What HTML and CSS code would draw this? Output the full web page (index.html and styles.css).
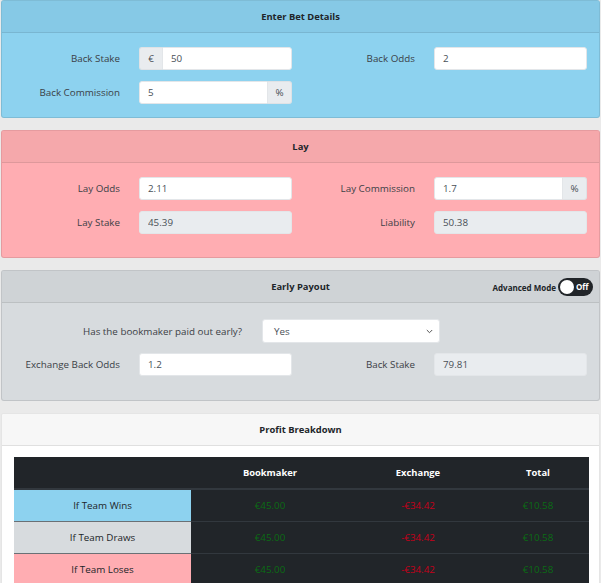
FILE: index.html
```html
<!DOCTYPE html>
<html>
<head>
<meta charset="utf-8">
<link rel="stylesheet" href="styles.css">
</head>
<body>
<div class="page">
  <section class="card card-blue">
    <div class="card-header">Enter Bet Details</div>
    <div class="card-body form-grid">
      <label class="lbl">Back Stake</label>
      <div class="group"><span class="addon addon-left">€</span><input class="field" value="50"></div>
      <label class="lbl">Back Odds</label>
      <input class="field" value="2">
      <label class="lbl">Back Commission</label>
      <div class="group"><input class="field" value="5"><span class="addon addon-right">%</span></div>
    </div>
  </section>

  <section class="card card-pink">
    <div class="card-header">Lay</div>
    <div class="card-body form-grid tall">
      <label class="lbl">Lay Odds</label>
      <input class="field" value="2.11">
      <label class="lbl">Lay Commission</label>
      <div class="group"><input class="field" value="1.7"><span class="addon addon-right">%</span></div>
      <label class="lbl">Lay Stake</label>
      <input class="field ro" value="45.39" readonly>
      <label class="lbl">Liability</label>
      <input class="field ro" value="50.38" readonly>
    </div>
  </section>

  <section class="card card-gray">
    <div class="card-header header-rel">Early Payout
      <div class="adv">
        <span class="adv-label">Advanced Mode</span>
        <span class="toggle"><span class="knob"></span><span class="toggle-text">Off</span></span>
      </div>
    </div>
    <div class="card-body gray-body">
      <div class="select-row">
        <label class="lbl">Has the bookmaker paid out early?</label>
        <div class="select">
          <span>Yes</span>
          <svg class="chev" width="7" height="5" viewBox="0 0 7 5"><path d="M0.8 1 L3.5 3.7 L6.2 1" fill="none" stroke="#555" stroke-width="1"/></svg>
        </div>
      </div>
      <div class="form-grid">
        <label class="lbl">Exchange Back Odds</label>
        <input class="field" value="1.2">
        <label class="lbl">Back Stake</label>
        <input class="field ro" value="79.81" readonly>
      </div>
    </div>
  </section>

  <section class="card card-white">
    <div class="card-header header-light">Profit Breakdown</div>
    <div class="table-wrap">
      <table class="results">
        <thead>
          <tr><th class="c1"></th><th class="c2">Bookmaker</th><th class="c3">Exchange</th><th class="c4">Total</th></tr>
        </thead>
        <tbody>
          <tr><td class="name n-blue">If Team Wins</td><td class="pos">€45.00</td><td class="neg">-€34.42</td><td class="pos">€10.58</td></tr>
          <tr><td class="name n-gray">If Team Draws</td><td class="pos">€45.00</td><td class="neg">-€34.42</td><td class="pos">€10.58</td></tr>
          <tr><td class="name n-pink">If Team Loses</td><td class="pos">€45.00</td><td class="neg">-€34.42</td><td class="pos">€10.58</td></tr>
        </tbody>
      </table>
    </div>
  </section>
</div>
</body>
</html>
```

FILE: styles.css
```css
* { box-sizing: border-box; }
html, body { margin: 0; padding: 0; }
body {
  background: #eaeaea;
  font-family: "Open Sans", "Noto Sans", sans-serif;
  font-size: 9.8px;
  color: #212529;
  overflow: hidden;
}
.page { padding: 0 1px; }
.card {
  border: 1px solid rgba(0,0,0,0.1);
  border-radius: 3px;
  margin-bottom: 12px;
  overflow: hidden;
}
.card-header {
  height: 32px;
  display: flex;
  align-items: center;
  justify-content: center;
  font-weight: 700;
  font-size: 9.4px;
  border-bottom: 1px solid rgba(0,0,0,0.09);
}
.card-blue { background: #8dd2ef; }
.card-blue .card-header { background: #86c9e6; }
.card-pink { background: #ffadb2; }
.card-pink .card-header { background: #f5a8ab; }
.card-gray { background: #d7dbde; }
.card-gray .card-header { background: #cfd3d6; }
.card-white { background: #fff; }
.header-light { background: #f7f7f7; }

.card-body { padding: 14px 12px 13px 0; }
.card-body.tall { padding-bottom: 23px; }
.form-grid {
  display: grid;
  grid-template-columns: 118px 153px 1fr 153px;
  column-gap: 19px;
  row-gap: 11px;
  align-items: center;
}
.lbl {
  text-align: right;
  color: #3b4046;
  white-space: nowrap;
}
.field {
  display: block;
  width: 100%;
  height: 23px;
  border: 1px solid #e3e6e9;
  border-radius: 3px;
  background: #fff;
  padding: 0 8px;
  font: inherit;
  color: #495057;
  outline: none;
}
.field.ro { background: #e9ecef; }
.group { display: flex; height: 23px; }
.group .field { flex: 1; min-width: 0; }
.addon {
  display: flex;
  align-items: center;
  justify-content: center;
  width: 23px;
  background: #e9ecef;
  border: 1px solid #dfe2e5;
  color: #495057;
}
.addon-left { border-radius: 3px 0 0 3px; border-right: 0; }
.addon-left + .field { border-radius: 0 3px 3px 0; }
.addon-right { border-radius: 0 3px 3px 0; border-left: 0; width: 24px; }
.group .field:first-child:not(:last-child) { border-radius: 3px 0 0 3px; }

.header-rel { position: relative; }
.adv {
  position: absolute;
  right: 6px;
  top: 7px;
  display: flex;
  align-items: center;
  gap: 2px;
}
.adv-label { font-size: 8px; font-weight: 700; color: #212529; }
.toggle {
  position: relative;
  display: flex;
  align-items: center;
  width: 35px;
  height: 18px;
  border-radius: 9px;
  background: #212529;
}
.knob {
  position: absolute;
  left: 2px;
  top: 2px;
  width: 14px;
  height: 14px;
  border-radius: 50%;
  background: #fff;
}
.toggle-text {
  position: absolute;
  left: 18px;
  top: 3px;
  font-size: 8px;
  font-weight: 700;
  color: #fff;
}
.gray-body { padding: 16px 12px 24px 0; }
.select-row {
  display: grid;
  grid-template-columns: 240px 178px;
  column-gap: 20px;
  align-items: center;
  margin-bottom: 10px;
}
.select {
  height: 24px;
  background: #fff;
  border: 1px solid #e3e6e9;
  border-radius: 3px;
  display: flex;
  align-items: center;
  justify-content: space-between;
  padding: 0 6px 0 11px;
  color: #495057;
}

.table-wrap { padding: 11px 12px 0 12px; }
.results {
  width: 575px;
  border-collapse: collapse;
  background: #212529;
  color: #fff;
  table-layout: fixed;
}
.results th {
  height: 32px;
  font-weight: 700;
  font-size: 9.4px;
  text-align: center;
  border-bottom: 2px solid #32383e;
}
.c1 { width: 177px; }
.c2 { width: 158px; }
.c3 { width: 138px; }
.c4 { width: 102px; }
.results td {
  height: 32px;
  text-align: center;
  border-top: 1px solid #32383e;
}
.results td.name { color: #212529; border-top: 1px solid #6a7075; }
.n-blue { background: #8dd2ef; }
.n-gray { background: #d7dbde; }
.n-pink { background: #ffadb2; }
.pos { color: #0b6b14; }
.neg { color: #c4001a; }
```
